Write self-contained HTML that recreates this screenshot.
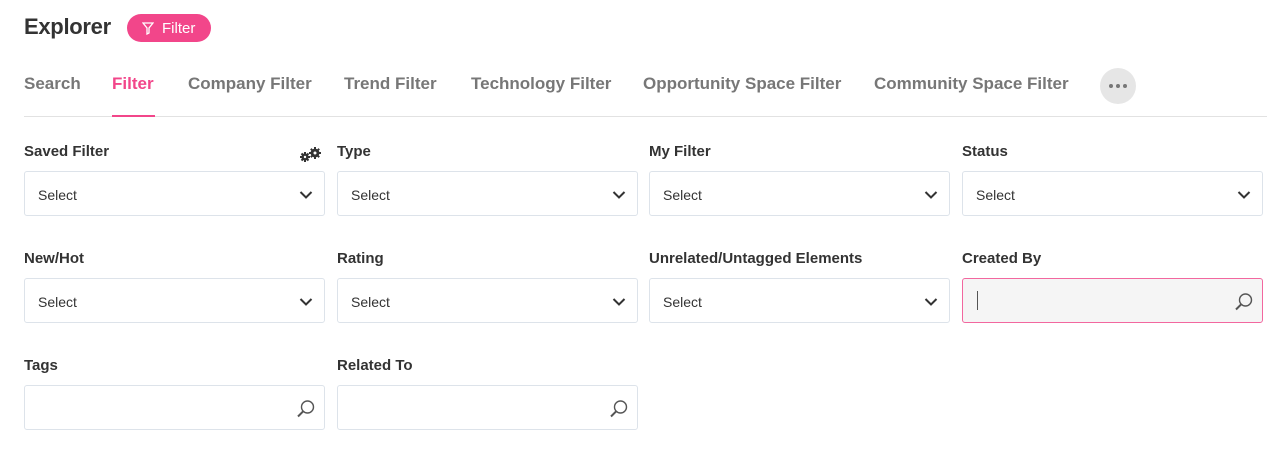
<!DOCTYPE html>
<html><head><style>
body{margin:0;width:1288px;height:453px;background:#fff;font-family:"Liberation Sans",sans-serif;position:relative;overflow:hidden;color:#333}
.abs{position:absolute}
.title{left:24px;top:14px;font-size:22px;font-weight:bold;color:#333;letter-spacing:-0.3px}
.badge{left:127px;top:14px;width:84px;height:28px;border-radius:14px;background:#f2468a;color:#fff;font-size:15px;line-height:30px}
.tab{top:74px;font-size:17px;font-weight:bold;color:#777;white-space:nowrap}
.line{left:24px;top:116px;width:1243px;height:1px;background:#e2e2e2}
.lbl{font-size:15px;font-weight:bold;color:#333}
.box{width:299px;height:43px;border:1px solid #dde3ea;border-radius:3px;background:#fff}
.box span{position:absolute;left:13px;top:15px;font-size:14px;color:#333}
.box svg{position:absolute}
</style></head><body>
<div class="abs title">Explorer</div>
<div class="abs badge"><svg class="abs" style="left:15px;top:8px" width="12" height="13" viewBox="0 0 12 13"><path d="M1 1h10L7 6v5L5 12V6z" fill="none" stroke="#fff" stroke-width="1.3"/></svg><span class="abs" style="left:35px">Filter</span></div>
<div class="abs tab" style="left:24px">Search</div>
<div class="abs tab" style="left:112px;color:#f2468a">Filter</div>
<div class="abs tab" style="left:188px">Company Filter</div>
<div class="abs tab" style="left:344px">Trend Filter</div>
<div class="abs tab" style="left:471px">Technology Filter</div>
<div class="abs tab" style="left:643px">Opportunity Space Filter</div>
<div class="abs tab" style="left:874px">Community Space Filter</div>
<div class="abs" style="left:1100px;top:68px;width:36px;height:36px;border-radius:18px;background:#e6e6e6"><svg class="abs" style="left:8px;top:15px" width="20" height="6"><circle cx="3" cy="3" r="2" fill="#777"/><circle cx="10" cy="3" r="2" fill="#777"/><circle cx="17" cy="3" r="2" fill="#777"/></svg></div>
<div class="abs line"></div>
<div class="abs" style="left:112px;top:115px;width:43px;height:2px;background:#f2468a"></div>

<div class="abs lbl" style="left:24px;top:143px">Saved Filter</div>
<svg class="abs" style="left:299px;top:147px" width="25" height="16" viewBox="0 0 25 16">
<g fill="#333"><circle cx="6" cy="10" r="3.6"/><circle cx="16" cy="6" r="4.4"/></g>
<g stroke="#333" stroke-width="2"><path d="M6 5v10M1 10h10M2.5 6.5l7 7M9.5 6.5l-7 7"/><path d="M16 0v12M10 6h12M11.8 1.8l8.4 8.4M20.2 1.8l-8.4 8.4"/></g>
<circle cx="6" cy="10" r="1.2" fill="#fff"/><circle cx="16" cy="6" r="1.5" fill="#fff"/></svg>
<div class="abs lbl" style="left:337px;top:143px">Type</div>
<div class="abs lbl" style="left:649px;top:143px">My Filter</div>
<div class="abs lbl" style="left:962px;top:143px">Status</div>
<div class="abs lbl" style="left:24px;top:250px">New/Hot</div>
<div class="abs lbl" style="left:337px;top:250px">Rating</div>
<div class="abs lbl" style="left:649px;top:250px">Unrelated/Untagged Elements</div>
<div class="abs lbl" style="left:962px;top:250px">Created By</div>
<div class="abs lbl" style="left:24px;top:357px">Tags</div>
<div class="abs lbl" style="left:337px;top:357px">Related To</div>

<div class="abs box" style="left:24px;top:171px"><span>Select</span><svg style="left:274px;top:18px" width="14" height="10"><path d="M1.5 2l5.5 5.5L12.5 2" fill="none" stroke="#333" stroke-width="2"/></svg></div>
<div class="abs box" style="left:337px;top:171px"><span>Select</span><svg style="left:274px;top:18px" width="14" height="10"><path d="M1.5 2l5.5 5.5L12.5 2" fill="none" stroke="#333" stroke-width="2"/></svg></div>
<div class="abs box" style="left:649px;top:171px"><span>Select</span><svg style="left:274px;top:18px" width="14" height="10"><path d="M1.5 2l5.5 5.5L12.5 2" fill="none" stroke="#333" stroke-width="2"/></svg></div>
<div class="abs box" style="left:962px;top:171px"><span>Select</span><svg style="left:274px;top:18px" width="14" height="10"><path d="M1.5 2l5.5 5.5L12.5 2" fill="none" stroke="#333" stroke-width="2"/></svg></div>
<div class="abs box" style="left:24px;top:278px"><span>Select</span><svg style="left:274px;top:18px" width="14" height="10"><path d="M1.5 2l5.5 5.5L12.5 2" fill="none" stroke="#333" stroke-width="2"/></svg></div>
<div class="abs box" style="left:337px;top:278px"><span>Select</span><svg style="left:274px;top:18px" width="14" height="10"><path d="M1.5 2l5.5 5.5L12.5 2" fill="none" stroke="#333" stroke-width="2"/></svg></div>
<div class="abs box" style="left:649px;top:278px"><span>Select</span><svg style="left:274px;top:18px" width="14" height="10"><path d="M1.5 2l5.5 5.5L12.5 2" fill="none" stroke="#333" stroke-width="2"/></svg></div>
<div class="abs box" style="left:962px;top:278px;background:#f5f5f5;border-color:#f2679f"><div class="abs" style="left:14px;top:12px;width:1px;height:19px;background:#555"></div><svg style="left:271px;top:13px" width="20" height="20"><circle cx="11.5" cy="8" r="6" fill="none" stroke="#555" stroke-width="1.4"/><path d="M7.3 12.2L2 17.5" stroke="#555" stroke-width="2"/></svg></div>
<div class="abs box" style="left:24px;top:385px"><svg style="left:271px;top:13px" width="20" height="20"><circle cx="11.5" cy="8" r="6" fill="none" stroke="#555" stroke-width="1.4"/><path d="M7.3 12.2L2 17.5" stroke="#555" stroke-width="2"/></svg></div>
<div class="abs box" style="left:337px;top:385px"><svg style="left:271px;top:13px" width="20" height="20"><circle cx="11.5" cy="8" r="6" fill="none" stroke="#555" stroke-width="1.4"/><path d="M7.3 12.2L2 17.5" stroke="#555" stroke-width="2"/></svg></div>
</body></html>
